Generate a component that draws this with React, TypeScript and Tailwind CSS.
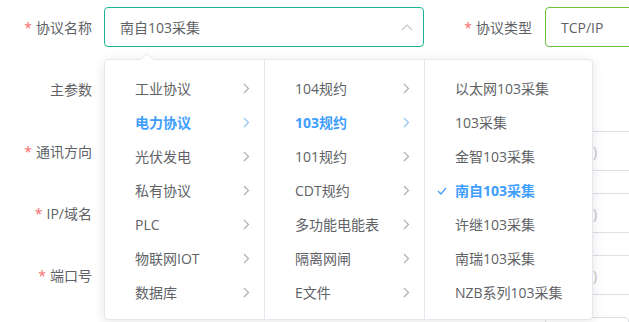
import { Fragment } from "react";

const col1 = ["工业协议", "电力协议", "光伏发电", "私有协议", "PLC", "物联网IOT", "数据库"];
const col2 = ["104规约", "103规约", "101规约", "CDT规约", "多功能电能表", "隔离网闸", "E文件"];
const col3 = ["以太网103采集", "103采集", "金智103采集", "南自103采集", "许继103采集", "南瑞103采集", "NZB系列103采集"];

function Chevron({ active }: { active?: boolean }) {
  return (
    <svg width="7" height="11" viewBox="0 0 7 11" className="shrink-0">
      <path d="M1 1 L5.5 5.5 L1 10" fill="none" stroke={active ? "#8cbef5" : "#a8abb2"} strokeWidth="1.1" />
    </svg>
  );
}

function Label({ text, required }: { text: string; required?: boolean }) {
  return (
    <div className="w-[92px] shrink-0 flex items-center justify-end text-[14px] text-[#606266]">
      {required && <span className="text-[#f56c6c] mr-[4px]">*</span>}
      {text}
    </div>
  );
}

function MenuColumn({ items, active, last }: { items: string[]; active: number; last?: boolean }) {
  return (
    <div className={`${last ? "w-[167px]" : "w-[160px] border-r border-[#e4e7ed]"} pt-[11px] pb-[10px]`}>
      {items.map((t, i) => (
        <div
          key={t}
          className={`relative h-[34px] flex items-center justify-between pl-[30px] pr-[14px] text-[14px] ${
            i === active ? "text-[#409eff] font-bold" : "text-[#606266]"
          }`}
        >
          {last && i === active && (
            <svg width="10" height="8" viewBox="0 0 10 8" className="absolute left-[12px] top-[14px]">
              <path d="M1 4 L4 7 L9 1" fill="none" stroke="#409eff" strokeWidth="1.2" />
            </svg>
          )}
          <span>{t}</span>
          {!last && <Chevron active={i === active} />}
        </div>
      ))}
    </div>
  );
}

export default function App() {
  const rows = [
    { text: "通讯方向", required: true },
    { text: "IP/域名", required: true },
    { text: "端口号", required: true },
  ];

  return (
    <div
      className="relative w-[629px] h-[322px] overflow-hidden bg-white"
      style={{ fontFamily: '"Open Sans", "Noto Sans CJK SC", sans-serif' }}
    >
      <div className="flex flex-col gap-[22px] pt-[7px]">
        <div className="flex items-center h-[40px]">
          <Label text="协议名称" required />
          <div className="ml-[12px] w-[320px] h-[40px] shrink-0 border border-[#1ab394] rounded-[4px] flex items-center justify-between pl-[15px] pr-[10px] text-[14px] text-[#606266]">
            <span>南自103采集</span>
            <svg width="12" height="7" viewBox="0 0 12 7">
              <path d="M1 6 L6 1 L11 6" fill="none" stroke="#c0c4cc" strokeWidth="1.1" />
            </svg>
          </div>
          <div className="w-[108px] shrink-0 flex items-center justify-end text-[14px] text-[#606266]">
            <span className="text-[#f56c6c] mr-[4px]">*</span>协议类型
          </div>
          <div className="ml-[13px] w-[200px] h-[40px] shrink-0 border border-[#67c23a] rounded-[4px] flex items-center pl-[15px] text-[14px] text-[#606266]">
            TCP/IP
          </div>
        </div>

        <div className="flex items-center h-[40px]">
          <Label text="主参数" />
        </div>

        {rows.map((r) => (
          <Fragment key={r.text}>
            <div className="flex items-center h-[40px]">
              <Label text={r.text} required={r.required} />
              <div className="ml-[453px] w-[200px] h-[40px] shrink-0 border border-[#dcdfe6] rounded-[4px] flex items-center pl-[47px] text-[14px] text-[#c0c4cc]">
                )
              </div>
            </div>
          </Fragment>
        ))}

        <div className="flex items-center h-[40px]">
          <div className="ml-[545px] w-[200px] h-[40px] border border-[#dcdfe6] rounded-[4px]" />
        </div>
      </div>

      {/* cascader dropdown */}
      <div className="absolute left-[104px] top-[59px] flex bg-white border border-[#e4e7ed] rounded-[4px] shadow-[0_2px_12px_0_rgba(0,0,0,0.1)]">
        <svg width="14" height="7" viewBox="0 0 14 7" className="absolute left-[35px] -top-[7px]">
          <path d="M0 7 L7 0.5 L14 7" fill="#ffffff" stroke="#e4e7ed" strokeWidth="1" />
          <rect x="0" y="6.5" width="14" height="1" fill="#ffffff" />
        </svg>
        <MenuColumn items={col1} active={1} />
        <MenuColumn items={col2} active={1} />
        <MenuColumn items={col3} active={3} last />
      </div>
    </div>
  );
}
